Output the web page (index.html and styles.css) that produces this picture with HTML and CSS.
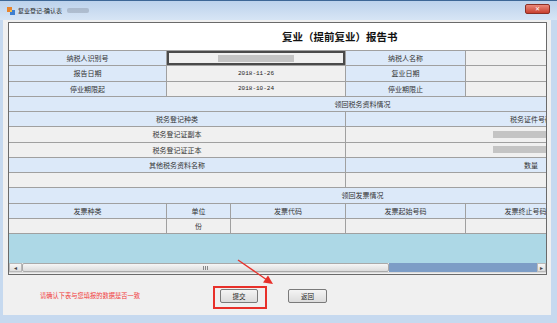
FILE: index.html
```html
<!doctype html>
<html lang="zh-CN">
  <head>
    <meta charset="UTF-8" />
    <title>复业登记-确认表</title>
    <link rel="stylesheet" href="styles.css">
  </head>
  <body>
    <div class="window">
      <div class="titlebar">
        <svg class="app-icon" width="8" height="8" viewBox="0 0 8 8">
          <rect x="0" y="0" width="5" height="5" fill="#e8842c" />
          <rect x="3" y="3" width="5" height="5" fill="#3f7fd0" />
          <rect x="3" y="3" width="2" height="2" fill="#f3c04a" />
        </svg>
        <span class="title-text">复业登记-确认表</span>
        <span class="title-blur"></span>
        <div class="close-btn">✕</div>
      </div>

      <div class="client">
        <div class="panel">
          <div class="report-head">复业（提前复业）报告书</div>

          <div class="viewport">
            <div class="grid">
              <div class="row cols-4">
                <div class="cell label">纳税人识别号</div>
                <div class="cell selected"><span class="mask"></span></div>
                <div class="cell label">纳税人名称</div>
                <div class="cell"></div>
              </div>
              <div class="row cols-4">
                <div class="cell label">报告日期</div>
                <div class="cell date">2018-11-26</div>
                <div class="cell label">复业日期</div>
                <div class="cell"></div>
              </div>
              <div class="row cols-4">
                <div class="cell label">停业期限起</div>
                <div class="cell date">2018-10-24</div>
                <div class="cell label">停业期限止</div>
                <div class="cell"></div>
              </div>
              <div class="row cols-1">
                <div class="cell label">领回税务资料情况</div>
              </div>
              <div class="row cols-2">
                <div class="cell label">税务登记种类</div>
                <div class="cell label">税务证件号码</div>
              </div>
              <div class="row cols-2">
                <div class="cell">税务登记证副本</div>
                <div class="cell"><span class="mask"></span></div>
              </div>
              <div class="row cols-2">
                <div class="cell">税务登记证正本</div>
                <div class="cell"><span class="mask"></span></div>
              </div>
              <div class="row cols-2">
                <div class="cell label">其他税务资料名称</div>
                <div class="cell label">数量</div>
              </div>
              <div class="row cols-2">
                <div class="cell"></div>
                <div class="cell"></div>
              </div>
              <div class="row cols-1">
                <div class="cell label">领回发票情况</div>
              </div>
              <div class="row cols-inv">
                <div class="cell label">发票种类</div>
                <div class="cell label">单位</div>
                <div class="cell label">发票代码</div>
                <div class="cell label">发票起始号码</div>
                <div class="cell label">发票终止号码</div>
                <div class="cell label"></div>
              </div>
              <div class="row cols-inv">
                <div class="cell"></div>
                <div class="cell">份</div>
                <div class="cell"></div>
                <div class="cell"></div>
                <div class="cell"></div>
                <div class="cell"></div>
              </div>
            </div>
          </div>

          <div class="hscroll">
            <div class="sb-btn">◂</div>
            <div class="sb-thumb"><span class="grip"></span></div>
            <div class="sb-track"></div>
            <div class="sb-btn">▸</div>
          </div>
          <div class="panel-foot"></div>
        </div>

        <div class="actions">
          <div class="notice">请确认下表与您填报的数据是否一致</div>
          <div class="mark">
            <button class="btn">提交</button>
          </div>
          <button class="btn back">返回</button>
        </div>
      </div>

      <svg class="arrow" width="50" height="36" viewBox="0 0 50 36">
        <line x1="6" y1="5" x2="35" y2="25" stroke="#e8302a" stroke-width="1.3" />
        <polygon points="41,29 31,27.5 36,20.5" fill="#e8302a" />
      </svg>
    </div>
  </body>
</html>
```

FILE: styles.css
```css
body {
  margin: 0;
  font-family: "Noto Sans CJK SC", sans-serif;
  color: #333;
}

.window {
  position: relative;
  width: 557px;
  height: 323px;
  background: #c6d9ef;
  overflow: hidden;
}

.titlebar {
  height: 20px;
  box-sizing: border-box;
  display: flex;
  align-items: center;
  padding-left: 7px;
  border-top: 1px solid #3d6796;
  background: linear-gradient(#bcd2ec, #d7e5f5);
}

.app-icon {
  flex: none;
}

.title-text {
  margin-left: 3px;
  font-size: 6px;
  color: #1e1e1e;
}

.title-blur {
  width: 22px;
  height: 5px;
  margin-left: 5px;
  border-radius: 2px;
  background: rgba(110, 115, 130, 0.3);
}

.close-btn {
  margin-left: auto;
  margin-right: 7px;
  align-self: flex-start;
  margin-top: 3px;
  width: 25px;
  height: 10px;
  box-sizing: border-box;
  border: 1px solid #8c3025;
  border-radius: 2px;
  background: linear-gradient(#e9897b, #c9402f);
  color: #fff;
  font-size: 6px;
  line-height: 8px;
  text-align: center;
}

.client {
  margin: 0 6px 0 3px;
  height: 295px;
  box-sizing: border-box;
  padding: 2px 4px 0 5px;
  background: #f0f0f0;
}

.panel {
  height: 253px;
  box-sizing: border-box;
  border: 1px solid #6a6a6a;
  overflow: hidden;
  background: #f0f0f0;
}

.report-head {
  height: 28px;
  box-sizing: border-box;
  border-bottom: 1px solid #a0a0a0;
  background: #fff;
  padding-left: 273px;
  font-size: 10.5px;
  font-weight: bold;
  line-height: 27px;
  color: #111;
  white-space: nowrap;
}

.viewport {
  height: 212px;
  overflow: hidden;
  background: #add8e6;
}

.grid {
  width: 708px;
}

.row {
  display: grid;
  height: 15.25px;
}

.cols-4 {
  grid-template-columns: 158px 179px 120px 1fr;
}

.cols-2 {
  grid-template-columns: 337px 1fr;
}

.cols-1 {
  grid-template-columns: 1fr;
}

.cols-inv {
  grid-template-columns: 158px 64px 115px 120px 120px 1fr;
}

.cell {
  box-sizing: border-box;
  display: flex;
  align-items: center;
  justify-content: center;
  border-right: 1px solid #a0a0a0;
  border-bottom: 1px solid #a0a0a0;
  background: #f0f0f0;
  font-size: 7px;
  white-space: nowrap;
  overflow: hidden;
}

.cell.label {
  background: #dce9f9;
}

.cell.selected {
  box-shadow: inset 0 0 0 2px #4a4a4a;
}

.cell.date {
  font-family: "Liberation Mono", monospace;
  font-size: 6px;
  color: #222;
}

.mask {
  width: 76px;
  height: 7px;
  background: #c4c4c4;
}

.hscroll {
  display: flex;
  height: 9px;
}

.sb-btn {
  width: 13px;
  box-sizing: border-box;
  border: 1px solid #b9b9b9;
  background: linear-gradient(#f7f7f7, #dedede);
  font-size: 6px;
  line-height: 7px;
  text-align: center;
  color: #444;
}

.sb-btn:last-child {
  width: 9px;
}

.sb-thumb {
  width: 367px;
  box-sizing: border-box;
  border: 1px solid #a9a9a9;
  border-radius: 2px;
  background: linear-gradient(#f6f6f6, #dcdcdc);
  display: flex;
  align-items: center;
  justify-content: center;
}

.grip {
  width: 5px;
  height: 4px;
  background: repeating-linear-gradient(90deg, #888 0 1px, transparent 1px 2px);
}

.sb-track {
  flex: 1;
  background: #7d9dc6;
}

.panel-foot {
  height: 2px;
  border-top: 1px solid #dadada;
}

.actions {
  display: flex;
  align-items: flex-start;
  height: 40px;
}

.notice {
  width: 205px;
  box-sizing: border-box;
  padding-left: 32px;
  margin-top: 16px;
  font-size: 6.25px;
  line-height: 9px;
  color: #f03a3a;
  white-space: nowrap;
}

.mark {
  margin-top: 11px;
  padding: 1px 7px 4px 5px;
  border: 2px solid #e8302a;
}

.btn {
  display: block;
  width: 38px;
  height: 14px;
  padding: 0;
  border: 1px solid #7a7a7a;
  border-radius: 2px;
  background: linear-gradient(#f4f4f4, #dcdcdc);
  font-family: "Noto Sans CJK SC", sans-serif;
  font-size: 6.5px;
  color: #222;
}

.btn.back {
  width: 39px;
  margin-top: 14px;
  margin-left: 21px;
}

.arrow {
  position: absolute;
  left: 232px;
  top: 255px;
}
```
